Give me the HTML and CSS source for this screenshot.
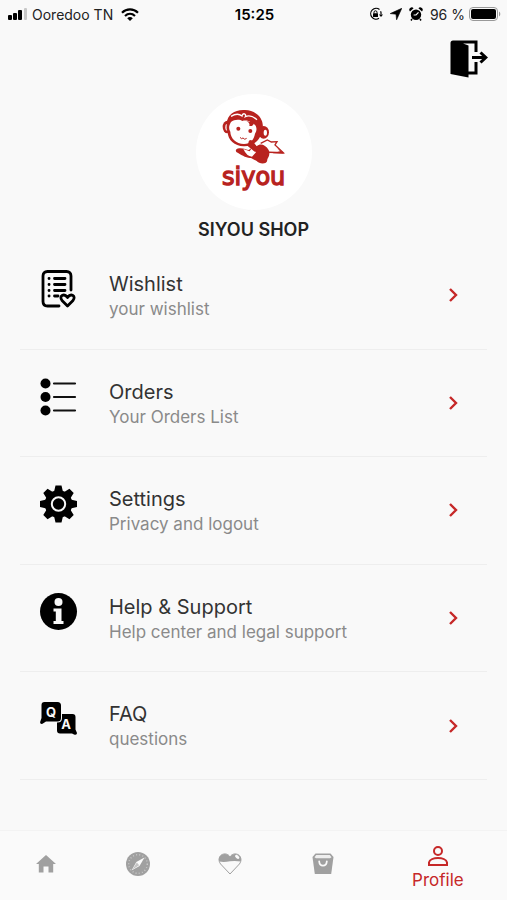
FILE: index.html
```html
<!DOCTYPE html>
<html lang="en">
<head>
    <meta charset="UTF-8">
    <meta name="viewport" content="width=device-width, initial-scale=1.0">
    <title>Profile</title>
    <link rel="stylesheet" href="styles.css">
</head>
<body>
    <!-- Status bar -->
    <div class="status-bar">
        <div class="status-left">
            <svg width="20" height="12" viewBox="0 0 20 12">
                <rect x="0" y="7" width="4" height="5" rx="1"/>
                <rect x="5" y="5" width="4" height="7" rx="1"/>
                <rect x="10" y="2" width="4" height="10" rx="1"/>
                <rect x="16" y="0" width="3" height="12" rx="1" fill="#c8c8c8"/>
            </svg>
            <span>Ooredoo TN</span>
            <svg class="wifi" width="18" height="13" viewBox="0 0 18 13" fill="none" stroke="#000" stroke-width="2.2">
                <path d="M1 4.8C5.500 .3 12.500 .3 17 4.800"/>
                <path d="M4 8C7 5.200 11 5.200 14 8"/>
                <path d="M9 13L6.200 10.200C8 8.700 10 8.700 11.800 10.200Z" fill="#000" stroke="none"/>
            </svg>
        </div>
        <div class="status-time">15:25</div>
        <div class="status-right">
            <svg width="14" height="14" viewBox="0 0 14 14">
                <path d="M10.500 2.500A5.400 5.400 0 1 0 10 11.300M11.600 4.300A5.400 5.400 0 0 1 12 7.500" fill="none" stroke="#000" stroke-width="1.200"/>
                <path d="M10 7.500h4l-2 2.600z"/>
                <rect x="4" y="6.200" width="5" height="3.800" rx=".5"/>
                <path d="M5 6.500V5.300a1.500 1.500 0 0 1 3 0V6.500" fill="none" stroke="#000"/>
            </svg>
            <svg width="12" height="12" viewBox="0 0 12 12">
                <path d="M11.800 .3L6.600 11.800L6 6.200L.2 5.600Z" stroke="#000" stroke-width=".6"/>
            </svg>
            <svg width="14" height="14" viewBox="0 0 14 14">
                <circle cx="7" cy="7.800" r="5.200"/>
                <path d="M1 4.500A2.400 2.400 0 0 1 4.600 1.200ZM13 4.500A2.400 2.400 0 0 0 9.400 1.200Z"/>
                <path d="M3 12l-1 1.500M11 12l1 1.500" stroke="#000" stroke-width="1.500"/>
                <path d="M9.500 5.300L7 8H4.600" fill="none" stroke="#f9f9f9" stroke-width="1.200"/>
            </svg>
            <span>96 %</span>
            <svg class="battery" width="32" height="14" viewBox="0 0 32 14">
                <rect x=".5" y=".5" width="28" height="13" rx="3.500" fill="none" stroke="#999"/>
                <rect x="2" y="2" width="25" height="10" rx="2"/>
                <path d="M30 4.500a3 3 0 0 1 0 5z" fill="#999"/>
            </svg>
        </div>
    </div>

    <!-- Logout -->
    <header class="top-bar">
        <button class="logout" type="button" aria-label="Logout">
            <svg width="38" height="38" viewBox="0 0 38 38">
                <path d="M3 .5H27.500V12H24.500V3.500H13L18.500 5.500V31.500H24.500V22H27.500V34.500H18.500V37.500L.5 34V3Q.5 .5 3 .5Z"/>
                <path d="M22 17.500H35M30.500 12.500L35.800 17.500L30.500 22.500" fill="none" stroke="#000" stroke-width="3"/>
            </svg>
        </button>
    </header>

    <!-- Shop -->
    <section class="shop">
        <div class="avatar">
            <svg width="80" height="96" viewBox="0 0 240 288" fill="#b8231f">
                <!-- cape -->
                <path d="M140 130L160 120L172 126L189 125L183 135L208 158L142 156" fill="#fff" stroke="#b8231f" stroke-width="4"/>
                <path d="M188 144L211 161L176 160L198 154Z"/>
                <!-- ears -->
                <ellipse cx="40" cy="81" rx="14" ry="19"/>
                <ellipse cx="39" cy="82" rx="5" ry="10" fill="#fff"/>
                <ellipse cx="149" cy="97" rx="16" ry="19"/>
                <ellipse cx="154" cy="98" rx="5" ry="9" fill="#fff"/>
                <!-- head -->
                <path d="M38 70C40 43 63 28 93 30C130 31 153 60 145 90C141 118 119 140 89 139C62 137 41 120 41 95C35 85 39 77 38 70Z"/>
                <path d="M51 66C61 57 79 58 85 63C92 61 104 61 111 68C129 72 131 90 123 101C120 118 110 131 90 132C66 132 49 114 49 95C43 86 45 76 51 66Z" fill="#fff"/>
                <path d="M51 49C64 41 77 42 84 48C86 37 98 41 94 50C105 45 119 50 129 59" fill="none" stroke="#fff" stroke-width="4"/>
                <path d="M97 63Q109 69 106 78Q118 80 120 68Z"/>
                <circle cx="73" cy="86" r="6"/>
                <circle cx="109" cy="93" r="6"/>
                <path d="M78 112Q82 119 87 114Q92 121 98 115" fill="none" stroke="#b8231f" stroke-width="3"/>
                <!-- body -->
                <path d="M104 128C105 118 116 119 120 129L128 139C139 129 154 134 164 150C170 163 162 174 160 178C161 194 136 193 128 183L111 174C97 176 80 163 68 157C62 151 67 144 78 145C91 145 98 150 104 150L114 143Z"/>
                <path d="M88 147L107 154L113 145L126 157L114 170Q98 169 88 147Z" fill="#fff"/>
                <path d="M104 128C103 118 114 118 120 130L132 145L122 155L101 138Z"/>
                <text class="logo-text" x="24" y="256">siyou</text>
            </svg>
        </div>
        <h1>SIYOU SHOP</h1>
    </section>

    <!-- Menu -->
    <main class="menu">
        <a class="menu-item" href="#">
            <svg class="menu-icon" viewBox="0 0 38 38" fill="none" stroke="#000" stroke-width="2.800" stroke-linecap="round">
                <path d="M31 20V6Q31 1.500 26.500 1.500H7.500Q3 1.500 3 6V31.500Q3 36 7.500 36H19"/>
                <path d="M9 8.500h.1M9 14.500h.1M9 20.500h.1M9 26h.1M14.500 8.500H25M14.500 14.500H25M14.500 20.500H25M14.500 26H18"/>
                <path d="M27.500 36L22 30.500C18.500 26 24 22.500 27.500 27.500C31 22.500 36.500 26 33 30.500Z" stroke-linejoin="round"/>
            </svg>
            <span class="menu-text">
                <span class="menu-title">Wishlist</span>
                <span class="menu-sub">your wishlist</span>
            </span>
            <svg class="chevron" viewBox="0 0 10 16"><path d="M2 2L8 8L2 14"/></svg>
        </a>
        <a class="menu-item" href="#">
            <svg class="menu-icon" viewBox="0 0 38 38">
                <circle cx="5.500" cy="5.500" r="5"/>
                <circle cx="5.500" cy="19" r="5"/>
                <circle cx="5.500" cy="32.500" r="5"/>
                <path d="M14 5.500H35M14 19H35M14 32.500H35" stroke="#111" stroke-width="2.200" stroke-linecap="round"/>
            </svg>
            <span class="menu-text">
                <span class="menu-title">Orders</span>
                <span class="menu-sub">Your Orders List</span>
            </span>
            <svg class="chevron" viewBox="0 0 10 16"><path d="M2 2L8 8L2 14"/></svg>
        </a>
        <a class="menu-item" href="#">
            <svg class="menu-icon" viewBox="0 0 38 38">
                <circle cx="18.500" cy="19" r="13.800"/>
                <g id="teeth">
                    <path d="M14 7L15.500 .5H21.500L23 7ZM14 31L15.500 37.500H21.500L23 31Z"/>
                    <path d="M6.500 14.500L0 16V22L6.500 23.500ZM30.500 14.500L37 16V22L30.500 23.500Z"/>
                </g>
                <use href="#teeth" transform="rotate(45 18.500 19)"/>
                <circle cx="18.500" cy="19" r="6.700" fill="none" stroke="#f9f9f9" stroke-width="2"/>
            </svg>
            <span class="menu-text">
                <span class="menu-title">Settings</span>
                <span class="menu-sub">Privacy and logout</span>
            </span>
            <svg class="chevron" viewBox="0 0 10 16"><path d="M2 2L8 8L2 14"/></svg>
        </a>
        <a class="menu-item" href="#">
            <svg class="menu-icon" viewBox="0 0 38 38">
                <circle cx="18.500" cy="18.500" r="18.500"/>
                <circle cx="18.500" cy="9" r="4" fill="#f9f9f9"/>
                <path d="M13.500 15.500H21.500V28H23.500V31H13.500V28H15.800V18.500H13.500Z" fill="#f9f9f9"/>
            </svg>
            <span class="menu-text">
                <span class="menu-title">Help &amp; Support</span>
                <span class="menu-sub">Help center and legal support</span>
            </span>
            <svg class="chevron" viewBox="0 0 10 16"><path d="M2 2L8 8L2 14"/></svg>
        </a>
        <a class="menu-item" href="#">
            <svg class="menu-icon" viewBox="0 0 38 38">
                <path d="M20 14H32.500Q35.500 14 35.500 17V29.500L37 33Q37 35.500 34 34.500L32 33.500H20Q17 33.500 17 30.500V17Q17 14 20 14Z"/>
                <path d="M4.500 2H17.500Q21 2 21 5.500V18Q21 21.500 17.500 21.500H6L2.500 23.800Q-.5 24.500 .3 21.500L1.500 18V5Q1.500 2 4.500 2Z" stroke="#f9f9f9" stroke-width="2" paint-order="stroke"/>
                <text class="faq-letter" x="11" y="17">Q</text>
                <text class="faq-letter" x="26" y="29">A</text>
            </svg>
            <span class="menu-text">
                <span class="menu-title">FAQ</span>
                <span class="menu-sub">questions</span>
            </span>
            <svg class="chevron" viewBox="0 0 10 16"><path d="M2 2L8 8L2 14"/></svg>
        </a>
    </main>

    <!-- Bottom navigation -->
    <nav class="bottom-nav">
        <a href="#" aria-label="Home">
            <svg width="24" height="24" viewBox="0 0 24 24">
                <path d="M12 3L22 12H19.200V20.500H14.500V14.500H9.500V20.500H4.800V12H2Z"/>
            </svg>
        </a>
        <a href="#" aria-label="Explore">
            <svg width="24" height="24" viewBox="0 0 24 24">
                <circle cx="12" cy="12" r="12"/>
                <circle cx="12" cy="12" r="9.300" fill="none" stroke="#c8c8c8" stroke-width="1.400" stroke-dasharray="1 2.200"/>
                <path d="M18.500 5.500L13.500 14L5.500 18.500L10.300 10Z" fill="#fafafa"/>
                <path d="M10.800 10.500L13.200 13.200L6.500 17.600Z" fill="#c4c4c4"/>
            </svg>
        </a>
        <a href="#" aria-label="Favorites">
            <svg width="24" height="24" viewBox="0 0 24 24">
                <path d="M12 22L2.600 12C.2 9 .7 5 3.300 3C6.500 .9 10.500 2 12 5C13.500 2 17.500 .9 20.700 3C23.300 5 23.800 9 21.400 12Z" fill="#fafafa" stroke="#a0a0a0"/>
                <path d="M1.200 9.500C.4 6.500 1.200 4.500 3.300 3C6.500 .9 10.500 2 12 5C13.500 2 17.500 .9 20.700 3C22.800 4.500 23.600 6.500 22.800 9.500Q18 8.500 12 9.200Q6 10.500 1.200 9.500Z"/>
                <ellipse cx="19.200" cy="4.800" rx="2.500" ry="1.500" fill="#fafafa" transform="rotate(40 19.200 4.800)"/>
            </svg>
        </a>
        <a href="#" aria-label="Cart">
            <svg width="24" height="24" viewBox="0 0 24 24">
                <path d="M4.500 1.500H19.500L22.500 5L20.200 22H3.800L1.500 5Z"/>
                <path d="M5.200 3H18.800L20.500 5.200L19 6.300H5L3.500 5.200Z" fill="#eee"/>
                <path d="M8.200 9.500C8.700 15 15.300 15 15.800 9.500" fill="none" stroke="#fafafa" stroke-width="1.800" stroke-linecap="round"/>
            </svg>
        </a>
        <a href="#" class="active">
            <svg width="20" height="20" viewBox="0 0 20 20" fill="none" stroke="#c62828" stroke-width="2">
                <circle cx="10" cy="5" r="4"/>
                <path d="M1 19V16.500C1.500 13.500 6 12 10 12S18.500 13.500 19 16.500V19Z"/>
            </svg>
            <span>Profile</span>
        </a>
    </nav>
</body>
</html>
```

FILE: styles.css
```css
* {
    box-sizing: border-box;
}
body {
    font-family: Inter, "Liberation Sans", sans-serif;
    background: #f9f9f9;
    color: #333;
    margin: 0;
    min-height: 100vh;
    display: flex;
    flex-direction: column;
}
a {
    text-decoration: none;
    color: inherit;
}
svg {
    display: block;
    flex-shrink: 0;
}

/* status bar */
.status-bar {
    display: grid;
    grid-template-columns: 1fr auto 1fr;
    align-items: center;
    height: 28px;
    padding: 0 6px 0 8px;
    font-size: 14px;
    color: #222;
}
.status-left,
.status-right {
    display: flex;
    align-items: center;
    gap: 4px;
}
.wifi {
    margin-left: 4px;
}
.status-right {
    justify-content: flex-end;
    gap: 7px;
}
.battery {
    margin-left: -3px;
}
.status-time {
    font-size: 15px;
    font-weight: 600;
    color: #000;
}

/* header */
.top-bar {
    display: flex;
    justify-content: flex-end;
    padding: 12px 19px 0;
}
.logout {
    background: none;
    border: none;
    padding: 0;
    cursor: pointer;
}
.shop {
    display: flex;
    flex-direction: column;
    align-items: center;
    padding-top: 16px;
}
.avatar {
    width: 116px;
    height: 116px;
    border-radius: 50%;
    background: #fff;
    display: flex;
    justify-content: center;
    align-items: center;
    padding-bottom: 8px;
}
.logo-text {
    font-family: "DejaVu Sans", sans-serif;
    font-size: 72px;
    stroke: #b8231f;
    stroke-width: 4px;
}
.shop h1 {
    margin: 8px 0 0;
    font-size: 18px;
    line-height: 24px;
    font-weight: 600;
    color: #222;
}

/* menu */
.menu {
    flex: 1;
    display: grid;
    grid-auto-rows: 1fr;
    padding: 0 20px 50px;
}
.menu-item {
    display: flex;
    align-items: flex-start;
    padding: 28px 29px 28px 20px;
    border-bottom: 1px solid #eee;
}
.menu-icon {
    width: 38px;
    height: 38px;
}
.menu-text {
    flex: 1;
    display: flex;
    flex-direction: column;
    margin-left: 31px;
}
.menu-title {
    font-size: 20px;
    line-height: 28px;
}
.menu-sub {
    font-size: 17px;
    line-height: 22px;
    color: #8a8a8a;
}
.chevron {
    width: 10px;
    height: 16px;
    align-self: center;
    fill: none;
    stroke: #c62828;
    stroke-width: 2.4;
}
.faq-letter {
    font-size: 13px;
    font-weight: 700;
    fill: #f9f9f9;
    text-anchor: middle;
}

/* bottom navigation */
.bottom-nav {
    display: flex;
    height: 70px;
    background: #fafafa;
    border-top: 1px solid #f3f3f3;
    fill: #a0a0a0;
}
.bottom-nav a {
    flex: 2;
    display: flex;
    flex-direction: column;
    align-items: center;
    justify-content: center;
    padding-bottom: 4px;
}
.bottom-nav .active {
    flex: 3;
    gap: 4px;
    padding: 4px 0 0;
    font-size: 17px;
    line-height: 20px;
    color: #c62828;
}
```
